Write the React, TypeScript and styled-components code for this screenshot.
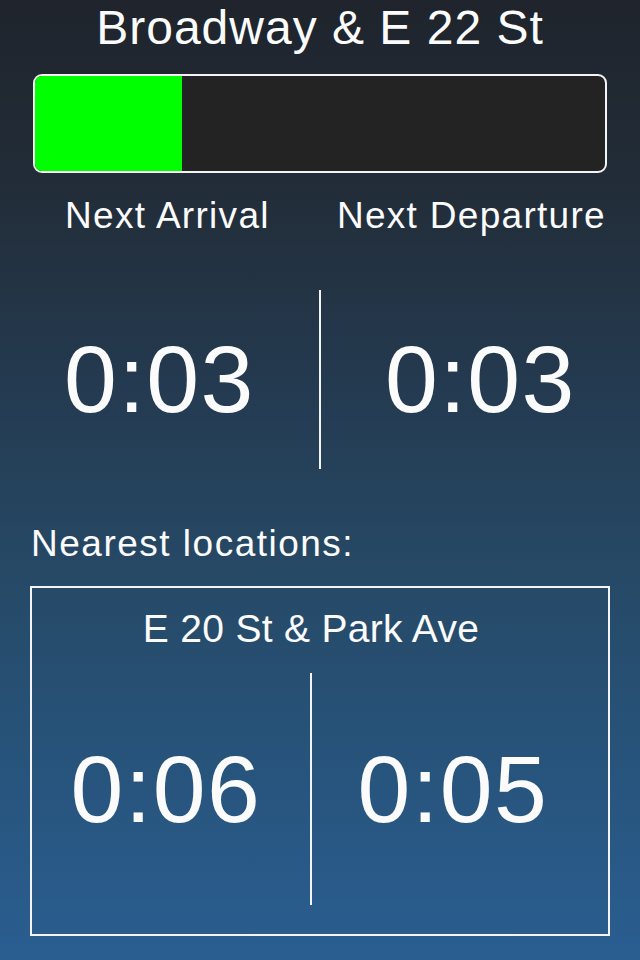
import React from "react";
import styled, { createGlobalStyle } from "styled-components";

const Global = createGlobalStyle`
  html, body { margin: 0; padding: 0; }
  body { font-family: "Liberation Sans", Arial, sans-serif; }
`;

const Screen = styled.div`
  width: 640px;
  height: 960px;
  overflow: hidden;
  color: #fbfbfb;
  font-family: "Liberation Sans", Arial, sans-serif;
  background: linear-gradient(
    180deg,
    #1f242c 0%,
    #222d39 20%,
    #243a50 40%,
    #264864 58%,
    #27537a 78%,
    #2a5e91 100%
  );
  display: flex;
  flex-direction: column;
`;

const Title = styled.h1`
  margin: 0;
  padding-top: 2px;
  font-weight: 400;
  font-size: 48px;
  line-height: 52px;
  letter-spacing: 1px;
  text-align: center;
`;

const Bar = styled.div`
  margin: 20px 33px 0;
  height: 95px;
  border: 2px solid #f4f4f4;
  border-radius: 9px;
  background: #232323;
  overflow: hidden;
  display: flex;
`;

const Fill = styled.div`
  background: #00ff00;
  height: 100%;
`;

const Labels = styled.div`
  margin: 21px 34px 0 33px;
  display: grid;
  grid-template-columns: 1fr 1fr;
  column-gap: 35px;
`;

const Label = styled.div`
  font-size: 37px;
  line-height: 44px;
  letter-spacing: 1.3px;
  text-align: center;
  white-space: nowrap;
`;

const TimeRow = styled.div<{ $height: number; $cols: string; $pr?: number }>`
  display: grid;
  grid-template-columns: ${(p) => p.$cols};
  height: ${(p) => p.$height}px;
  padding-right: ${(p) => p.$pr ?? 0}px;
  align-items: center;
`;

const Time = styled.div<{ $pr?: number }>`
  font-size: 95px;
  line-height: 1;
  letter-spacing: 1.5px;
  text-align: center;
  padding-right: ${(p) => p.$pr ?? 0}px;
`;

const Divider = styled.div`
  width: 2px;
  height: 100%;
  background: #f4f4f4;
`;

const MainTimes = styled(TimeRow)`
  margin-top: 52px;
`;

const Section = styled.div`
  margin: 53px 0 0 31px;
  font-size: 37px;
  line-height: 44px;
  letter-spacing: 1.5px;
`;

const Card = styled.div`
  margin: 20px 30px 0;
  height: 350px;
  box-sizing: border-box;
  border: 2px solid #f4f4f4;
  display: flex;
  flex-direction: column;
`;

const CardTitle = styled.div`
  margin-top: 18px;
  padding-right: 18px;
  font-size: 39px;
  line-height: 46px;
  letter-spacing: 0.3px;
  text-align: center;
`;

const CardTimes = styled(TimeRow)`
  margin-top: 21px;
`;

export default function App() {
  const progress = 0.258;
  return (
    <>
      <Global />
      <Screen>
        <Title>Broadway &amp; E 22 St</Title>
        <Bar>
          <Fill style={{ width: `${progress * 100}%` }} />
        </Bar>
        <Labels>
          <Label>Next Arrival</Label>
          <Label>Next Departure</Label>
        </Labels>
        <MainTimes $height={179} $cols="319px 2px 1fr">
          <Time>0:03</Time>
          <Divider />
          <Time>0:03</Time>
        </MainTimes>
        <Section>Nearest locations:</Section>
        <Card>
          <CardTitle>E 20 St &amp; Park Ave</CardTitle>
          <CardTimes $height={232} $cols="278px 2px 1fr" $pr={14}>
            <Time $pr={10}>0:06</Time>
            <Divider />
            <Time>0:05</Time>
          </CardTimes>
        </Card>
      </Screen>
    </>
  );
}
